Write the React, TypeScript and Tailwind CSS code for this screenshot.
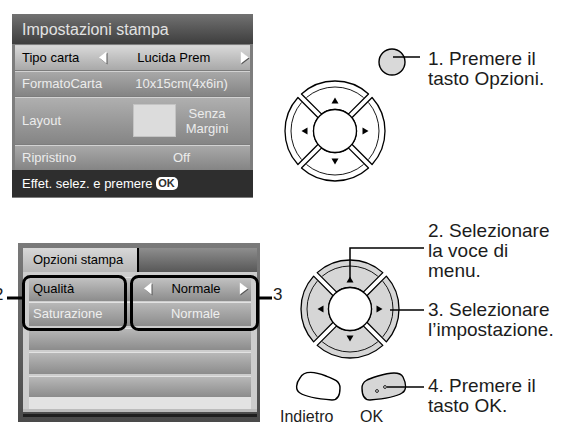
import React from 'react'

const rad = (d: number) => (d * Math.PI) / 180

// point on circle radius rho, along a side line parallel to a diagonal, offset by g
function sidePt(cx: number, cy: number, rho: number, g: number, side: number, normal: number) {
  const t = Math.sqrt(rho * rho - g * g)
  return [
    cx + g * Math.cos(rad(normal)) + t * Math.cos(rad(side)),
    cy + g * Math.sin(rad(normal)) + t * Math.sin(rad(side))
  ]
}

function segPath(cx: number, cy: number, R: number, r: number, g: number, th: number) {
  const ao = sidePt(cx, cy, R, g, th - 45, th + 45)
  const bo = sidePt(cx, cy, R, g, th + 45, th - 45)
  const bi = sidePt(cx, cy, r, g, th + 45, th - 45)
  const ai = sidePt(cx, cy, r, g, th - 45, th + 45)
  return `M${ao[0]} ${ao[1]} A${R} ${R} 0 0 1 ${bo[0]} ${bo[1]} L${bi[0]} ${bi[1]} A${r} ${r} 0 0 0 ${ai[0]} ${ai[1]} Z`
}

function ringPath(cx: number, cy: number, rho: number, g: number, th: number) {
  const a = sidePt(cx, cy, rho, g + 1, th - 45, th + 45)
  const b = sidePt(cx, cy, rho, g + 1, th + 45, th - 45)
  return `M${a[0]} ${a[1]} A${rho} ${rho} 0 0 1 ${b[0]} ${b[1]}`
}

function arrowPath(cx: number, cy: number, a: number, th: number) {
  const c = Math.cos(rad(th))
  const s = Math.sin(rad(th))
  const tip = [cx + (a + 3.5) * c, cy + (a + 3.5) * s]
  const bx = cx + (a - 2.5) * c
  const by = cy + (a - 2.5) * s
  return `M${tip[0]} ${tip[1]} L${bx - 3.5 * s} ${by + 3.5 * c} L${bx + 3.5 * s} ${by - 3.5 * c} Z`
}

function DPad({ cx, cy, R, fill, a }: { cx: number; cy: number; R: number; fill: string; a: number }) {
  const r = 21.5
  const g = 2.5
  return (
    <g stroke="#000" strokeWidth={1.3}>
      {[-90, 0, 90, 180].map((th) => (
        <g key={th}>
          <path d={segPath(cx, cy, R, r, g, th)} fill={fill} strokeLinejoin="round" />
          <path d={ringPath(cx, cy, R - 6, g, th)} fill="none" strokeWidth={0.9} />
          <path d={arrowPath(cx, cy, a, th)} fill="#000" stroke="none" />
        </g>
      ))}
      <circle cx={cx} cy={cy} r={r} fill="#fff" />
    </g>
  )
}

function LcdArrow({ dir }: { dir: 'left' | 'right' }) {
  return (
    <svg width="10" height="14" viewBox="0 0 10 14" className="shrink-0">
      {dir === 'left' ? (
        <>
          <polygon points="9.5,1.8 9.5,13.5 2,7.6" fill="#555" />
          <polygon points="8.5,0.6 8.5,12.4 1,6.5" fill="#fff" />
        </>
      ) : (
        <>
          <polygon points="1.5,1.8 1.5,13.5 9.5,7.6" fill="#555" />
          <polygon points="0.8,0.6 0.8,12.4 8.8,6.5" fill="#fff" />
        </>
      )}
    </svg>
  )
}

const row = 'flex items-center bg-gradient-to-b shadow-[inset_0_1px_0_#d2d2d2]'

function PrintSettings() {
  return (
    <div className="ml-[12px] mt-[14px] flex h-[184px] w-[241px] shrink-0 flex-col bg-[#7d7d7d] pb-px text-[13px]">
      <div className="flex h-[30px] items-center bg-gradient-to-b from-[#727272] to-[#3e3e3e] pl-[10px] pt-[2px] text-[16px] text-[#e2e2e2]">
        Impostazioni stampa
      </div>
      <div className="flex flex-col gap-px px-[3px] pt-px">
        <div className={`${row} h-[25px] from-[#dadada] to-[#a9a9a9] pl-[7px] text-black`}>
          <span className="w-[76px]">Tipo carta</span>
          <LcdArrow dir="left" />
          <span className="w-[133px] text-center">Lucida Prem</span>
          <LcdArrow dir="right" />
        </div>
        <div className={`${row} h-[25px] from-[#aaaaaa] to-[#848484] pl-[7px] text-[#ececec]`}>
          <span className="w-[91px]">FormatoCarta</span>
          <span className="w-[137px] text-center">10x15cm(4x6in)</span>
        </div>
        <div className={`${row} h-[47px] from-[#b0b0b0] to-[#858585] pl-[7px] text-[#ececec]`}>
          <span className="w-[111px]">Layout</span>
          <div className="h-[33px] w-[43px] border border-[#c4c4c4] bg-[#dcdcdc]" />
          <div className="w-[62px] text-center leading-[15px]">
            <div>Senza</div>
            <div>Margini</div>
          </div>
        </div>
        <div className={`${row} h-[25px] from-[#aaaaaa] to-[#848484] pl-[7px] text-[#ececec]`}>
          <span className="w-[91px]">Ripristino</span>
          <span className="w-[137px] text-center">Off</span>
        </div>
      </div>
      <div className="flex h-[27px] items-center gap-[3px] bg-[#2e2e2e] pl-[10px] text-white">
        <span>Effet. selez. e premere</span>
        <span className="flex h-[13px] w-[22px] items-center justify-center rounded-[5px] bg-white text-[11px] font-bold leading-none text-[#2e2e2e]">
          OK
        </span>
      </div>
    </div>
  )
}

const row2 = 'flex items-center bg-gradient-to-b from-[#bababa] to-[#8c8c8c] shadow-[inset_0_1px_0_#e2e2e2]'

function PrintOptions() {
  return (
    <div className="ml-[18px] mt-[43px] flex h-[179px] w-[242px] shrink-0 flex-col bg-gradient-to-b from-[#7a7a7a] to-[#4a4a4a] pl-[5px] pr-[3px] pt-[5px] text-[13px]">
      <div className="flex h-[24px]">
        <div className="flex w-[116px] items-center border-r-2 border-black bg-gradient-to-b from-[#d8d8d8] to-[#b6b6b6] pl-[10px] text-black">
          Opzioni stampa
        </div>
        <div className="flex-1 bg-gradient-to-b from-[#8e8e8e] to-[#585858]" />
      </div>
      <div className="flex h-[140px] flex-col border-b-[3px] border-[#bcbcbc] bg-[#cdcdcd] px-[6px] pt-[5px]">
        <div className={`${row2} h-[24px] from-[#c4c4c4] text-black`}>
          <span className="w-[96px] pl-[4px]">Qualità</span>
          <span className="w-[18px]" />
          <LcdArrow dir="left" />
          <span className="flex-1 text-center">Normale</span>
          <LcdArrow dir="right" />
          <span className="w-[2px]" />
        </div>
        <div className={`${row2} mt-px h-[24px] text-[#efefef]`}>
          <span className="w-[96px] pl-[4px]">Saturazione</span>
          <span className="w-[27px]" />
          <span className="flex-1 text-center">Normale</span>
          <span className="w-[12px]" />
        </div>
        <div className={`${row2} mt-[2px] h-[22px]`} />
        <div className={`${row2} mt-[2px] h-[22px]`} />
        <div className={`${row2} mt-[2px] h-[21px]`} />
        <div className="h-[12px] bg-[#e3e3e3]" />
      </div>
      <div className="mt-[2px] h-[3px] bg-[#1e1e1e]" />
    </div>
  )
}

export default function App() {
  return (
    <div className="relative h-[422px] w-[562px] overflow-hidden bg-white font-['Liberation_Sans',Arial,sans-serif]">
      <div className="flex h-[200px]">
        <PrintSettings />
        <div className="ml-auto w-[134px] whitespace-nowrap pt-[49px] text-[19px] leading-[20px] text-[#1c1c1c]">
          <div>1. Premere il</div>
          <div>tasto Opzioni.</div>
        </div>
      </div>
      <div className="flex h-[222px]">
        <PrintOptions />
        <div className="ml-auto flex w-[134px] flex-col whitespace-nowrap pt-[21px] text-[19px] leading-[20px] text-[#1c1c1c]">
          <div>
            <div>2. Selezionare</div>
            <div>la voce di</div>
            <div>menu.</div>
          </div>
          <div className="mt-[19px]">
            <div>3. Selezionare</div>
            <div>l’impostazione.</div>
          </div>
          <div className="mt-[36px]">
            <div>4. Premere il</div>
            <div>tasto OK.</div>
          </div>
        </div>
      </div>

      <svg className="pointer-events-none absolute inset-0" width="562" height="422" viewBox="0 0 562 422">
        {/* options button */}
        <circle cx="392" cy="62" r="13" fill="#d9d9d9" stroke="#000" strokeWidth="1.4" />
        <path d="M393 57H420" stroke="#000" strokeWidth="1.5" />
        <DPad cx={335} cy={131} R={50} fill="#fff" a={30} />

        <DPad cx={350} cy={309} R={49} fill="#d6d6d6" a={29} />
        <path d="M350 279V248H424" fill="none" stroke="#000" strokeWidth="1.5" />
        <path d="M390 310H424" stroke="#000" strokeWidth="1.5" />

        {/* back button */}
        <path
          d="M300 378C304 370 316 372 326 376C334 379 340 381 340 388C340 395 338 400 332 400C320 399 306 397 300 393C295 390 296 383 300 378Z"
          fill="#fff"
          stroke="#000"
          strokeWidth="1.4"
        />
        {/* OK button */}
        <path
          d="M403 377C400 371 388 373 378 376C368 379 362 381 362 388C362 395 364 400 370 400C382 399 396 397 402 393C407 390 406 383 403 377Z"
          fill="#d6d6d6"
          stroke="#000"
          strokeWidth="1.4"
        />
        <circle cx="377" cy="391" r="1.4" fill="#fff" stroke="#000" strokeWidth="0.9" />
        <circle cx="385" cy="387" r="1.4" fill="#fff" stroke="#000" strokeWidth="0.9" />
        <path d="M387 387H424" stroke="#000" strokeWidth="1.5" />

        {/* callouts over the options panel */}
        <rect x="23.5" y="276.5" width="102" height="53" rx="7" fill="none" stroke="#000" strokeWidth="3" />
        <rect x="131.5" y="276.5" width="126" height="53" rx="7" fill="none" stroke="#000" strokeWidth="3" />
        <path d="M7 298H22" stroke="#000" strokeWidth="3" />
        <path d="M259 298H272" stroke="#000" strokeWidth="3" />
      </svg>

      <span className="absolute left-[-6px] top-[286px] text-[17px] leading-none text-[#1c1c1c]">2</span>
      <span className="absolute left-[273px] top-[286px] text-[17px] leading-none text-[#1c1c1c]">3</span>
      <span className="absolute left-[280px] top-[409px] text-[16px] leading-none text-[#1c1c1c]">Indietro</span>
      <span className="absolute left-[360px] top-[409px] text-[16px] leading-none text-[#1c1c1c]">OK</span>
    </div>
  )
}
